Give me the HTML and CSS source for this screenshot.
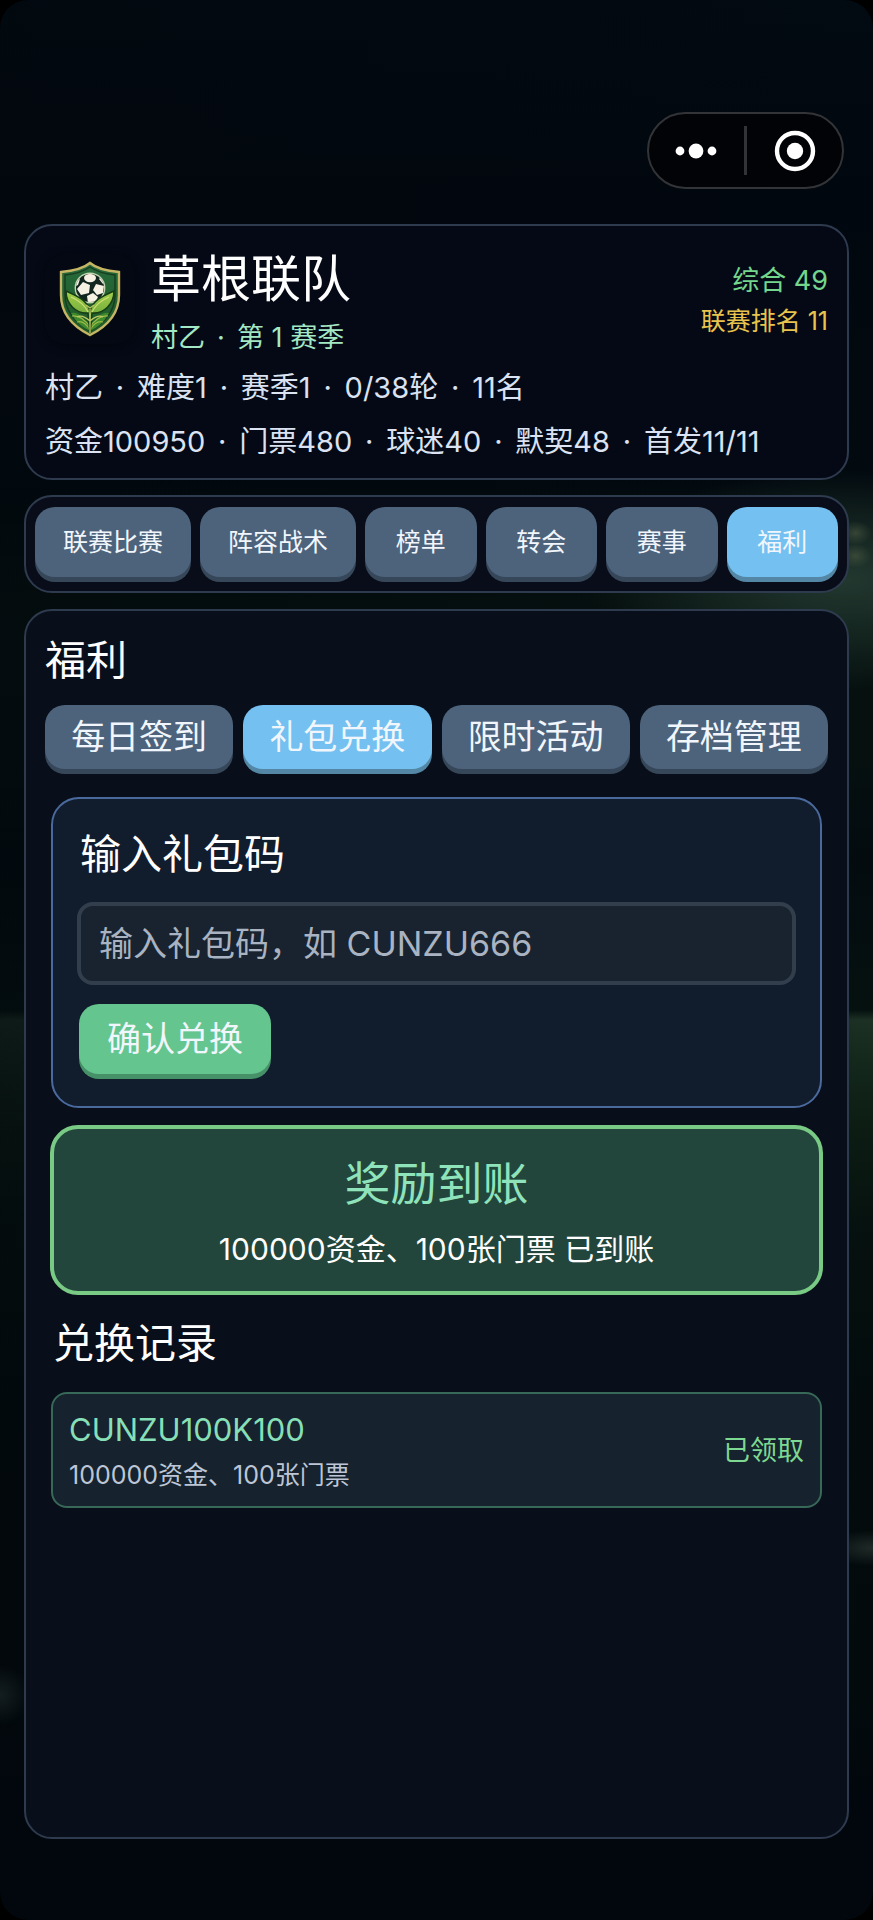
FILE: index.html
```html
<!DOCTYPE html>
<html lang="zh-CN">
<head>
<meta charset="utf-8">
<meta name="viewport" content="width=device-width, initial-scale=1">
<title>草根联队</title>
<link rel="stylesheet" href="styles.css">
</head>
<body>
<div class="app">
  <div class="capsule">
    <button class="capsule-btn" type="button" aria-label="更多">
      <svg width="44" height="20" viewBox="0 0 44 20"><g fill="#fff"><circle cx="5" cy="10" r="4.4"/><circle cx="21" cy="10" r="7.4"/><circle cx="37" cy="10" r="4.4"/></g></svg>
    </button>
    <span class="capsule-line"></span>
    <button class="capsule-btn" type="button" aria-label="关闭">
      <svg width="42" height="42" viewBox="0 0 42 42"><circle cx="21" cy="21" r="18" fill="none" stroke="#fff" stroke-width="4.4"/><circle cx="21" cy="21" r="8.2" fill="#fff"/></svg>
    </button>
  </div>

  <header class="card club">
    <div class="club-top">
      <div class="crest">
        <svg width="66" height="80" viewBox="0 0 66 80">
          <defs>
            <linearGradient id="field" x1="0" y1="0" x2="0" y2="1"><stop offset="0" stop-color="#276a3c"/><stop offset="1" stop-color="#1f5a26"/></linearGradient>
            <linearGradient id="leaf" x1="0" y1="0" x2="0" y2="1"><stop offset="0" stop-color="#a3cf4c"/><stop offset="1" stop-color="#4f9430"/></linearGradient>
            <clipPath id="ball"><circle cx="33" cy="29" r="14"/></clipPath>
          </defs>
          <path d="M33 2C26 9 14 11 3 12V36C3 56 16 69 33 78C50 69 63 56 63 36V12C52 11 40 9 33 2Z" fill="#14230f"/>
          <path d="M33 4C26 10 15 12 4 13V36C4 55 17 68 33 76C49 68 62 55 62 36V13C51 12 40 10 33 4Z" fill="url(#field)" stroke="#c5b565" stroke-width="2.4"/>
          <path d="M33 8C26 13 17 15 8 16V36C8 53 19 64 33 72C47 64 58 53 58 36V16C49 15 40 13 33 8Z" fill="none" stroke="#173c1e" stroke-width="1.4"/>
          <path d="M14 54Q24 52 33 70Q42 52 52 54Q46 66 33 72Q20 66 14 54Z" fill="#3f8a2c"/>
          <path d="M15 57Q25 56 33 68Q41 56 51 57M20 63Q27 61 33 71Q39 61 46 63" fill="none" stroke="#9dbb48" stroke-width="1.2"/>
          <circle cx="33" cy="29" r="15.4" fill="#c3d6b0"/>
          <circle cx="33" cy="29" r="14" fill="#12251f"/>
          <g clip-path="url(#ball)" fill="#f7f1e4">
            <ellipse cx="33" cy="19" rx="6" ry="4.2"/>
            <path d="M26 23L33 26L32 34L24 36L20 30Z"/>
            <path d="M39 25L47 27L46 34L40 36L36 31Z"/>
            <path d="M30 37L36 34L41 38L38 44H31Z"/>
            <path d="M17 33L22 37L24 43L17 42ZM18 22L23 20L21 26L17 28ZM44 18L49 25L46 25L42 20Z"/>
          </g>
          <path d="M33 52C30 41 20 37 9 32C9 45 19 55 31 54L33 74L35 54C47 55 57 45 57 32C46 37 36 41 33 52Z" fill="url(#leaf)" stroke="#173e16" stroke-width="1.6"/>
          <path d="M14 38Q26 43 31 53M52 38Q40 43 35 53" fill="none" stroke="#d4df78" stroke-width="1.1"/>
          <path d="M29 46L33 49L37 46M33 50V74M33 62Q25 55 20 58M33 62Q41 55 46 58" fill="none" stroke="#bfc965" stroke-width="1.3"/>
        </svg>
      </div>
      <div class="club-name">
        <h1>草根联队</h1>
        <ul class="dotted season">
          <li>村乙</li><li>第 1 赛季</li>
        </ul>
      </div>
      <div class="club-rank">
        <p class="overall">综合 49</p>
        <p class="league">联赛排名 11</p>
      </div>
    </div>
    <ul class="dotted stats">
      <li>村乙</li><li>难度1</li><li>赛季1</li><li>0/38轮</li><li>11名</li>
    </ul>
    <ul class="dotted stats">
      <li>资金100950</li><li>门票480</li><li>球迷40</li><li>默契48</li><li>首发11/11</li>
    </ul>
  </header>

  <nav class="card main-nav">
    <button class="btn" type="button">联赛比赛</button>
    <button class="btn" type="button">阵容战术</button>
    <button class="btn" type="button">榜单</button>
    <button class="btn" type="button">转会</button>
    <button class="btn" type="button">赛事</button>
    <button class="btn active" type="button" aria-current="page">福利</button>
  </nav>

  <main class="card panel">
    <h2>福利</h2>
    <div class="tabs">
      <button class="btn" type="button">每日签到</button>
      <button class="btn active" type="button">礼包兑换</button>
      <button class="btn" type="button">限时活动</button>
      <button class="btn" type="button">存档管理</button>
    </div>

    <form class="redeem">
      <label for="code">输入礼包码</label>
      <input id="code" type="text" placeholder="输入礼包码，如 CUNZU666">
      <button class="btn confirm" type="button">确认兑换</button>
    </form>

    <section class="reward">
      <h3>奖励到账</h3>
      <p>100000资金、100张门票 已到账</p>
    </section>

    <h2 class="log-title">兑换记录</h2>
    <article class="record">
      <div>
        <p class="record-code">CUNZU100K100</p>
        <p class="record-detail">100000资金、100张门票</p>
      </div>
      <span class="record-state">已领取</span>
    </article>
  </main>
</div>
</body>
</html>
```

FILE: styles.css
```css
:root {
  --line: #2e3a4e;
  --slate: #4d637c;
  --slate-edge: #37475a;
  --sky: #74c0f0;
  --sky-edge: #5487a6;
}

* {
  box-sizing: border-box;
}

body {
  margin: 0;
  background: #000;
  color: #fff;
  font-family: Inter, "Noto Sans CJK SC", sans-serif;
  font-weight: 400;
}

h1, h2, h3, p, ul {
  margin: 0;
  padding: 0;
  font-weight: 400;
}

button, input {
  font: inherit;
  color: inherit;
}

.app {
  min-height: 100vh;
  padding: 112px 24px 81px;
  display: flex;
  flex-direction: column;
  border-radius: 28px;
  background:
    radial-gradient(ellipse 16px 12px at 98% 533px, #46543faa 0, #46543f00 100%),
    radial-gradient(ellipse 16px 12px at 98% 556px, #46543faa 0, #46543f00 100%),
    radial-gradient(ellipse 260px 110px at 97% 580px, #22382f 0, #22382f00 100%),
    radial-gradient(ellipse 50px 18px at 100% 1548px, #26332fcc 0, #18231f00 100%),
    radial-gradient(ellipse 30px 30px at 0 1695px, #182323cc 0, #131e1e00 100%),
    linear-gradient(90deg, #01070c88 0, #01070c00 100%),
    linear-gradient(#020a12 0, #01070e 200px, #020a0f 480px, #06110f 600px, #05100f 760px, #030b0f 860px, #05110f 1010px, #1c3024 1020px, #14281c 1060px, #0c1c13 1130px, #06120f 1220px, #030b0c 1400px, #030a0c 1700px, #01070c 1800px, #01070c 100%);
}

.card {
  border: 2px solid var(--line);
  border-radius: 28px;
}

.capsule {
  align-self: flex-end;
  display: flex;
  align-items: center;
  width: 197px;
  height: 77px;
  margin: 0 5px 35px;
  border: 2px solid #333437;
  border-radius: 40px;
  background: #020306;
}

.capsule-btn {
  flex: 1;
  display: flex;
  justify-content: center;
  padding: 0;
  border: 0;
  background: none;
}

.capsule-line {
  width: 3px;
  height: 49px;
  background: #323336;
}

.dotted {
  display: flex;
  list-style: none;
}

.dotted li + li::before {
  content: "·";
  display: inline-block;
  width: 32px;
  text-align: center;
}

.club {
  padding: 23px 19px 16px;
  background: #040915;
}

.club-top {
  display: flex;
  gap: 16px;
  margin-bottom: 12px;
}

.crest {
  display: flex;
  align-items: center;
  justify-content: center;
  width: 90px;
  height: 90px;
  margin-top: 5px;
  border-radius: 20px;
  background: #030813;
  box-shadow: 0 2px 10px #02060e;
}

.club-name {
  flex: 1;
}

.club-name h1 {
  font-size: 50px;
  line-height: 60px;
  margin-bottom: 11px;
}

.season {
  font-size: 27px;
  line-height: 36px;
  color: #a3e8c4;
}

.club-rank {
  padding-top: 12px;
  text-align: right;
  line-height: 40px;
}

.overall {
  font-size: 27px;
  color: #74d68c;
}

.league {
  font-size: 25px;
  color: #e8c44e;
}

.stats {
  font-size: 29px;
  line-height: 40px;
  color: #dbe2f2;
}

.dotted.stats li + li::before {
  width: 34px;
}

.stats + .stats {
  margin-top: 14px;
}

.btn {
  height: 70px;
  margin-bottom: 5px;
  padding: 0 0 5px;
  border: 0;
  border-radius: 20px;
  background: var(--slate);
  box-shadow: 0 5px 0 var(--slate-edge);
  color: #f1f6fc;
  white-space: nowrap;
}

.btn.active {
  background: var(--sky);
  box-shadow: 0 5px 0 var(--sky-edge);
}

.main-nav {
  display: grid;
  grid-template-columns: 7fr 7fr 5fr 5fr 5fr 5fr;
  gap: 9px;
  margin-top: 15px;
  padding: 10px 9px 9px;
  background: #080d19;
  font-size: 25px;
}

.panel {
  flex: 1;
  margin-top: 16px;
  padding: 24px 19px;
  background: #090f1a;
}

.panel h2 {
  font-size: 41px;
  line-height: 50px;
}

.tabs {
  display: grid;
  grid-template-columns: repeat(4, 1fr);
  gap: 10px;
  margin-top: 20px;
  font-size: 34px;
}

.tabs .btn {
  height: 64px;
}

.redeem {
  margin: 23px 6px 17px;
  padding: 30px 24px 27px;
  border: 2px solid #4a6a9e;
  border-radius: 28px;
  background: #111c2d;
  font-size: 34px;
}

.redeem label {
  display: block;
  margin: 0 3px 23px;
  font-size: 41px;
  line-height: 50px;
}

.redeem input {
  display: block;
  width: 100%;
  height: 83px;
  margin-bottom: 19px;
  padding: 0 18px;
  border: 4px solid #333e4c;
  border-radius: 16px;
  background: #18232f;
}

.redeem input::placeholder {
  color: #a9b3c1;
  opacity: 1;
}

.redeem .confirm {
  display: block;
  margin-left: 2px;
  padding: 0 28px 5px;
  background: #65c58f;
  box-shadow: 0 5px 0 #479168;
}

.reward {
  margin: 0 5px;
  padding: 24px 20px 22px;
  border: 4px solid #78ca84;
  border-radius: 28px;
  background: #22463c;
  text-align: center;
}

.reward h3 {
  font-size: 46px;
  line-height: 60px;
  color: #8fe3bb;
}

.reward p {
  margin-top: 16px;
  font-size: 30px;
  line-height: 40px;
}

.panel .log-title {
  margin: 23px 8px 24px;
}

.record {
  display: flex;
  align-items: center;
  justify-content: space-between;
  margin: 0 6px;
  padding: 14px 16px;
  border: 2px solid #376858;
  border-radius: 16px;
  background: #16222d;
}

.record-code {
  font-size: 31px;
  line-height: 44px;
  color: #86dfb6;
}

.record-detail {
  margin-top: 6px;
  font-size: 25px;
  line-height: 34px;
  color: #bcc6d6;
}

.record-state {
  padding-bottom: 4px;
  font-size: 27px;
  color: #7dd892;
}
```
